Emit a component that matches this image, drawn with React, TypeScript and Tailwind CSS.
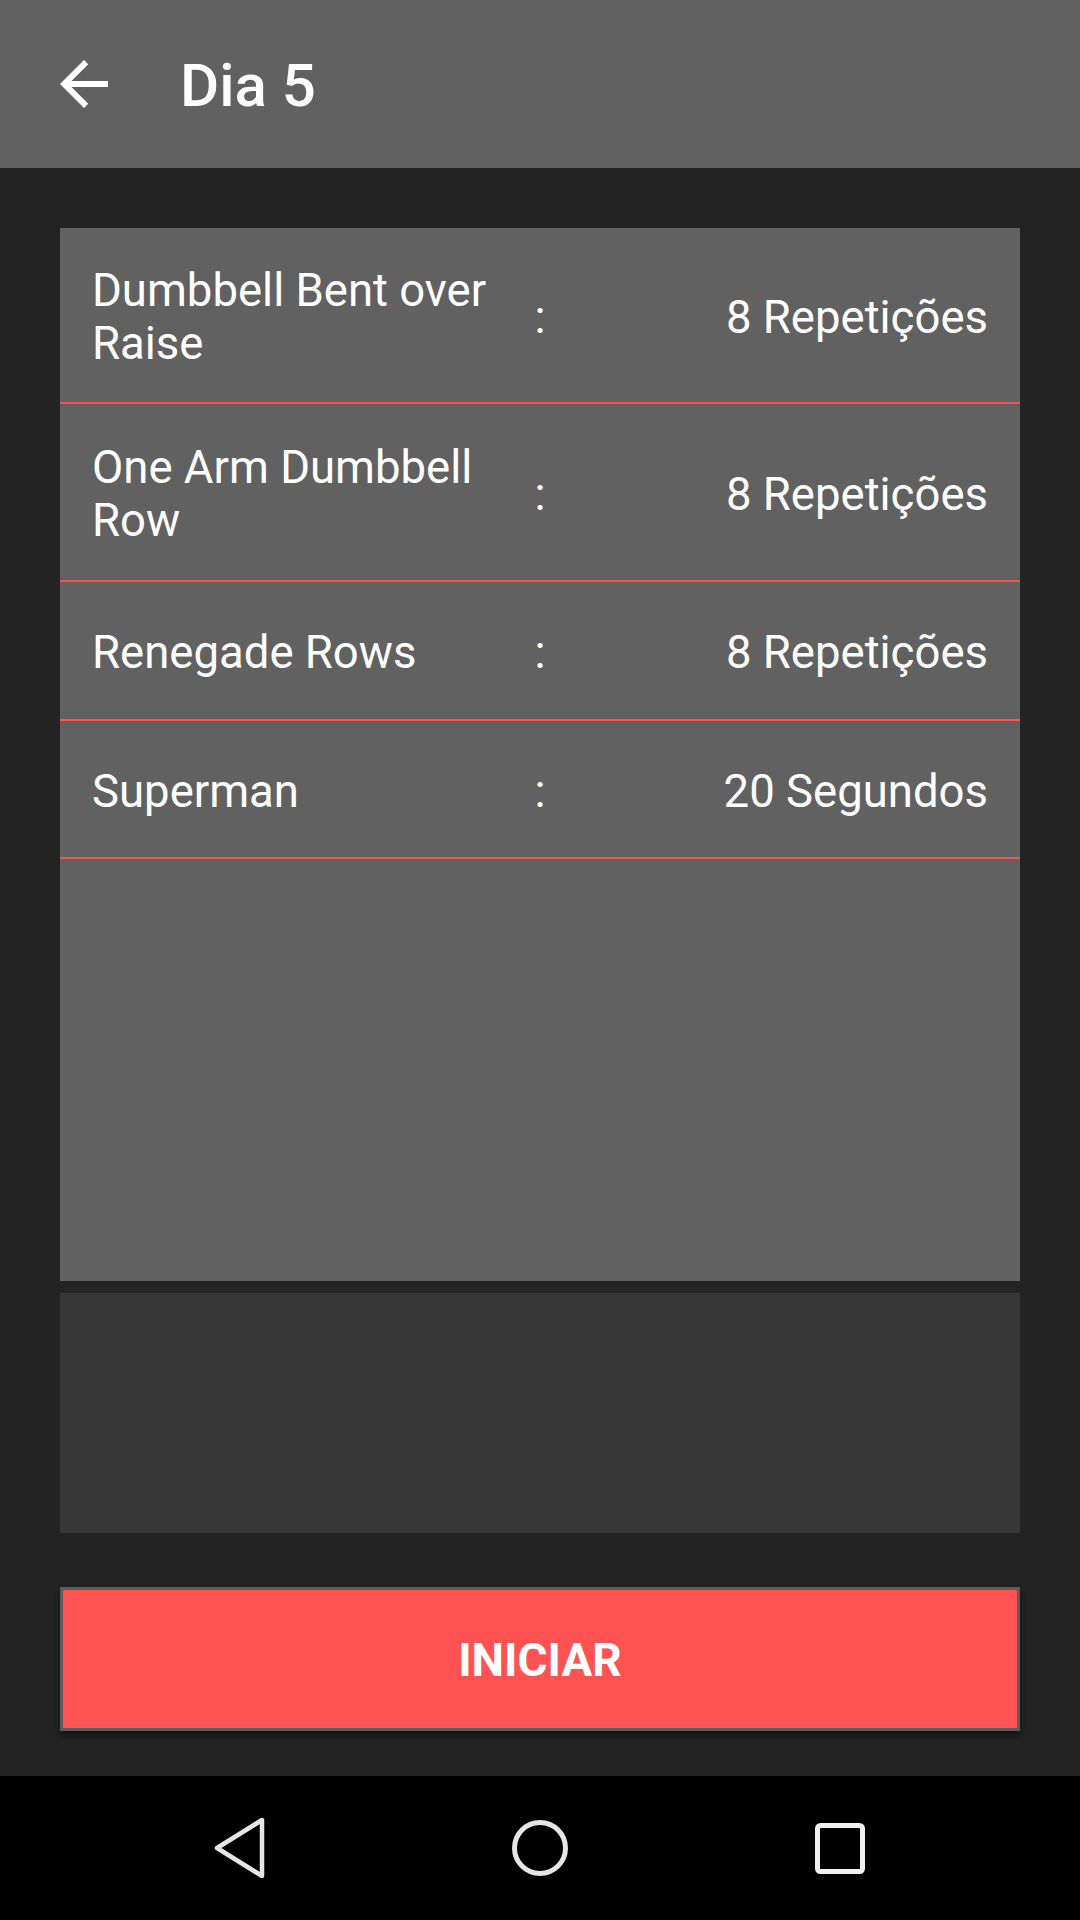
import React from "react";

const rows = [
  { name: "Dumbbell Bent over Raise", value: "8 Repetições", h: "h-[176px]" },
  { name: "One Arm Dumbbell Row", value: "8 Repetições", h: "h-[178px]" },
  { name: "Renegade Rows", value: "8 Repetições", h: "h-[139px]" },
  { name: "Superman", value: "20 Segundos", h: "h-[138px]" },
];

export default function App() {
  return (
    <div
      className="w-[1080px] h-[1920px] bg-[#232323] flex flex-col overflow-hidden"
      style={{ fontFamily: "Roboto, 'Noto Sans', sans-serif" }}
    >
      {/* Header */}
      <div className="h-[168px] bg-[#616161] flex items-center shrink-0">
        <svg className="ml-[48px]" width="72" height="72" viewBox="0 0 24 24" fill="#ffffff">
          <path d="M20 11H7.83l5.59-5.59L12 4l-8 8 8 8 1.41-1.41L7.83 13H20v-2z" />
        </svg>
        <div className="ml-[60px] mt-[4px] text-white text-[60px] font-medium leading-none">Dia 5</div>
      </div>

      {/* Content */}
      <div className="flex-1 flex flex-col px-[60px] pt-[60px]">
        <div className="h-[1053px] bg-[#616161] flex flex-col">
          {rows.map((r) => (
            <div
              key={r.name}
              className={`${r.h} border-b-2 border-[#f55252] grid grid-cols-[401px_94px_401px] items-center pl-[32px] pr-[31px] pt-[4px] text-white text-[45.5px] leading-[53px]`}
            >
              <div>{r.name}</div>
              <div className="text-center">:</div>
              <div className="text-right">{r.value}</div>
            </div>
          ))}
        </div>
        <div className="mt-[12px] h-[240px] bg-[#373737]" />
        <div className="mt-[54px] h-[144px] bg-[#ff5252] border-[3px] border-[#5c5c5c] shadow-[0_4px_6px_rgba(0,0,0,0.45)] flex items-center justify-center">
          <span className="text-white text-[46px] font-bold pt-[2px]">INICIAR</span>
        </div>
      </div>

      {/* Nav bar */}
      <div className="h-[144px] bg-black shrink-0 flex items-center justify-center gap-[220px]">
        <svg width="80" height="80" viewBox="0 0 80 80">
          <path
            d="M62 12 L62 68 L17 40 Z"
            fill="none"
            stroke="#e6e6e6"
            strokeWidth="4.5"
            strokeLinejoin="round"
          />
        </svg>
        <svg width="80" height="80" viewBox="0 0 80 80">
          <circle cx="40" cy="40" r="25.5" fill="none" stroke="#e6e6e6" strokeWidth="5" />
        </svg>
        <svg width="80" height="80" viewBox="0 0 80 80">
          <rect x="17.5" y="17.5" width="45" height="46" rx="3" fill="none" stroke="#f0f0f0" strokeWidth="5" />
        </svg>
      </div>
    </div>
  );
}
